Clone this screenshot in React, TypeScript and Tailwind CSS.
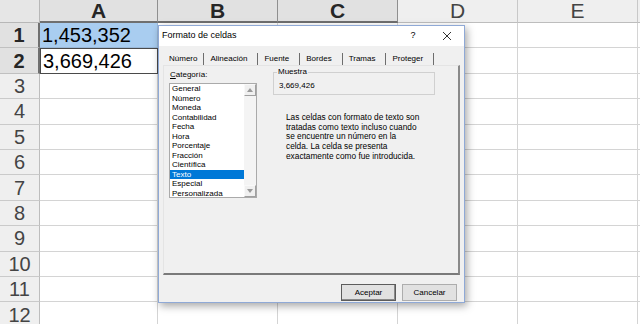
import React from 'react';

const columns = [
  { label: 'A', selected: true },
  { label: 'B', selected: true },
  { label: 'C', selected: true },
  { label: 'D', selected: false },
  { label: 'E', selected: false },
];

const categories = [
  'General',
  'Número',
  'Moneda',
  'Contabilidad',
  'Fecha',
  'Hora',
  'Porcentaje',
  'Fracción',
  'Científica',
  'Texto',
  'Especial',
  'Personalizada',
];

const tabs = ['Número', 'Alineación', 'Fuente', 'Bordes', 'Tramas', 'Proteger'];

const Arrow: React.FC<{ up?: boolean }> = ({ up }) => (
  <svg width="6" height="4" viewBox="0 0 6 4">
    {up ? <path d="M0 4 L3 0 L6 4 Z" fill="#9a9a9a" /> : <path d="M0 0 L3 4 L6 0 Z" fill="#9a9a9a" />}
  </svg>
);

const FormatDialog: React.FC = () => (
  <div className="absolute left-[158px] top-[25px] w-[307px] h-[278px] bg-[#f0f0f0] border border-[#8fa9d6] shadow-[2px_3px_8px_rgba(0,0,0,0.35)] flex flex-col text-[8px] text-black font-['Liberation_Sans',Arial,sans-serif]">
    {/* title bar */}
    <div className="h-[20px] bg-white flex items-center pl-[3px] shrink-0">
      <span className="text-[9px] flex-1">Formato de celdas</span>
      <span className="text-[9px] w-[12px] text-center mr-[23px]">?</span>
      <svg width="10" height="10" viewBox="0 0 10 10" className="mr-[12px]">
        <path d="M1 1 L9 9 M9 1 L1 9" stroke="#333" strokeWidth="1" />
      </svg>
    </div>

    {/* tabs */}
    <div className="flex items-end h-[19px] pb-0 pl-[8px] shrink-0">
      {tabs.map((t, i) => (
        <div key={t} className="flex items-center">
          <span className={i === 0 ? 'px-[2px] leading-[10px]' : 'px-[6px] leading-[10px]'}>{t}</span>
          <span className="w-px h-[12px] bg-[#6d6d6d] ml-[4px]" />
        </div>
      ))}
    </div>

    {/* tab panel */}
    <div className="mx-[4px] h-[210px] border-t border-l border-t-[#e4e4e4] border-l-[#e4e4e4] border-r-2 border-b-2 border-r-[#8a8a8a] border-b-[#7a7a7a] bg-[#f0f0f0] flex pt-[4px] pl-[5px] shrink-0">
      <div className="flex flex-col w-[88px]">
        <span className="leading-[10px] pl-px">
          <span className="underline">C</span>ategoría:
        </span>
        <div className="mt-[3px] h-[115px] bg-white border border-[#aaaaaa] flex">
          <div className="flex-1 flex flex-col">
            {categories.map((c) => (
              <div
                key={c}
                className={
                  c === 'Texto'
                    ? 'h-[9.5px] leading-[9.5px] pl-[2px] bg-[#0078d7] text-white'
                    : 'h-[9.5px] leading-[9.5px] pl-[2px]'
                }
              >
                {c}
              </div>
            ))}
          </div>
          <div className="w-[12px] flex flex-col justify-between bg-[#f4f4f4]">
            <div className="h-[12px] bg-[#f0f0f0] border border-[#f9f9f9] border-r-[#a0a0a0] border-b-[#a0a0a0] flex items-center justify-center">
              <Arrow up />
            </div>
            <div className="h-[12px] bg-[#f0f0f0] border border-[#f9f9f9] border-r-[#a0a0a0] border-b-[#a0a0a0] flex items-center justify-center">
              <Arrow />
            </div>
          </div>
        </div>
      </div>

      <div className="flex flex-col ml-[16px]">
        <div className="relative mt-[2px] w-[162px] h-[23px] border border-[#d0d0d0] flex items-end pl-[5px] pb-[3px]">
          <span className="absolute left-[3px] -top-[6px] bg-[#f0f0f0] px-px leading-[10px]">Muestra</span>
          <span className="leading-[10px]">3,669,426</span>
        </div>
        <div className="mt-[18px] ml-[13px] leading-[9.7px] text-[8.3px]">
          <div>Las celdas con formato de texto son</div>
          <div>tratadas como texto incluso cuando</div>
          <div>se encuentre un número en la</div>
          <div>celda. La celda se presenta</div>
          <div>exactamente como fue introducida.</div>
        </div>
      </div>
    </div>

    {/* buttons */}
    <div className="flex justify-end gap-[6px] mt-[9px] pr-[7px]">
      <div className="w-[55px] h-[17px] bg-[#e1e1e1] border border-[#5c5c5c] shadow-[inset_-1px_-1px_0_#8a8a8a] flex items-center justify-center">
        Aceptar
      </div>
      <div className="w-[55px] h-[17px] bg-[#e1e1e1] border border-[#adadad] flex items-center justify-center">
        Cancelar
      </div>
    </div>
  </div>
);

const App: React.FC = () => {
  const rows = Array.from({ length: 12 }, (_, i) => i + 1);

  return (
    <div className="relative w-[640px] h-[324px] overflow-hidden bg-white font-['Liberation_Sans',Arial,sans-serif]">
      <div className="grid grid-cols-[40px_118px_120px_120px_120px_120px_2px] grid-rows-[23px_repeat(12,25.4px)]">
        {/* header row */}
        <div className="bg-[#e6e6e6] border-r border-b border-[#b7b7b7]" />
        {columns.map((c) => (
          <div
            key={c.label}
            className={
              c.selected
                ? 'bg-[#e1e1e1] border-r border-b-2 border-r-[#8f8f8f] border-b-[#6f6f6f] flex items-center justify-center text-[21px] font-bold text-[#262626]'
                : 'bg-[#efefef] border-r border-b border-r-[#c8c8c8] border-b-[#bdbdbd] flex items-center justify-center text-[21px] text-[#444]'
            }
          >
            {c.label}
          </div>
        ))}
        <div className="bg-[#efefef] border-b border-[#bdbdbd]" />

        {rows.map((r) => (
          <React.Fragment key={r}>
            <div
              className={
                r <= 2
                  ? 'bg-[#e1e1e1] border-b border-r-2 border-b-[#c0c0c0] border-r-[#6f6f6f] flex items-center justify-center text-[20px] font-bold text-[#262626]'
                  : 'bg-[#efefef] border-b border-r border-b-[#cacaca] border-r-[#bdbdbd] flex items-center justify-center text-[20px] text-[#444]'
              }
            >
              {r}
            </div>
            {columns.map((c, ci) => {
              if (r === 1 && ci === 0)
                return (
                  <div key={c.label} className="bg-[#a9cdf0] border-b border-r border-[#9ab8d8] flex items-center pl-[2px] text-[20px] text-black">
                    1,453,352
                  </div>
                );
              if (r === 2 && ci === 0)
                return (
                  <div key={c.label} className="bg-white border border-[#4a4a4a] flex items-center pl-[2px] text-[20px] text-black">
                    3,669,426
                  </div>
                );
              return <div key={c.label} className="border-b border-r border-[#d4d4d4]" />;
            })}
            <div className="border-b border-[#d4d4d4]" />
          </React.Fragment>
        ))}
      </div>

      <FormatDialog />
    </div>
  );
};

export default App;
